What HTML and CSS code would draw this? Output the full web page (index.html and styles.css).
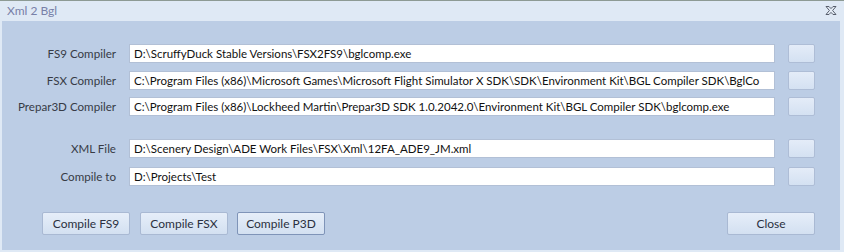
FILE: index.html
```html
<!DOCTYPE html>
<html>
<head>
<meta charset="utf-8">
<link rel="stylesheet" href="styles.css">
</head>
<body>
<div class="window">
  <div class="titlebar">
    <span class="title">Xml 2 Bgl</span>
    <svg class="close-x" width="12" height="9" viewBox="0 0 12 9">
      <path d="M1 0.5 H4 L6 2.6 L8 0.5 H11 L7.6 4.5 L11 8.5 H8 L6 6.4 L4 8.5 H1 L4.4 4.5 Z" fill="#e4ecf6" stroke="#575e6c" stroke-width="1"/>
    </svg>
  </div>
  <div class="panel">
    <div class="fields group1">
      <div class="row">
        <label class="lbl">FS9 Compiler</label>
        <div class="field">D:\ScruffyDuck Stable Versions\FSX2FS9\bglcomp.exe</div>
        <div class="browse"></div>
      </div>
      <div class="row r2">
        <label class="lbl">FSX Compiler</label>
        <div class="field">C:\Program Files (x86)\Microsoft Games\Microsoft Flight Simulator X SDK\SDK\Environment Kit\BGL Compiler SDK\BglCo</div>
        <div class="browse"></div>
      </div>
      <div class="row r3">
        <label class="lbl">Prepar3D Compiler</label>
        <div class="field">C:\Program Files (x86)\Lockheed Martin\Prepar3D SDK 1.0.2042.0\Environment Kit\BGL Compiler SDK\bglcomp.exe</div>
        <div class="browse"></div>
      </div>
    </div>
    <div class="fields group2">
      <div class="row">
        <label class="lbl">XML File</label>
        <div class="field">D:\Scenery Design\ADE Work Files\FSX\Xml\12FA_ADE9_JM.xml</div>
        <div class="browse"></div>
      </div>
      <div class="row r5">
        <label class="lbl">Compile to</label>
        <div class="field">D:\Projects\Test</div>
        <div class="browse"></div>
      </div>
    </div>
    <div class="actions">
      <button class="btn">Compile FS9</button>
      <button class="btn b2">Compile FSX</button>
      <button class="btn b3 focused">Compile P3D</button>
      <button class="btn close">Close</button>
    </div>
  </div>
</div>
</body>
</html>
```
FILE: styles.css
```css
* { box-sizing: border-box; }
html, body {
  margin: 0;
  padding: 0;
  width: 844px;
  height: 252px;
  overflow: hidden;
  background: #dfe9f5;
  font-family: "Lato", "Noto Sans", sans-serif;
  font-size: 12px;
}
.window {
  width: 844px;
  height: 252px;
  border-top: 1px solid #8d9a94;
  background: #dfe9f5;
  display: flex;
  flex-direction: column;
}
.titlebar {
  height: 20px;
  display: flex;
  align-items: center;
  justify-content: space-between;
  padding: 0 7px 0 7px;
}
.title {
  color: #7880a8;
  line-height: 20px;
}
.close-x { margin-top: -1px; }
.panel {
  margin: 0 4px 2px 2px;
  flex: 1;
  background: #bccde5;
  padding-top: 23px;
}
.row {
  display: flex;
  align-items: center;
  height: 19px;
}
.r2 { margin-top: 8px; }
.r3 { margin-top: 7px; }
.group2 { margin-top: 23px; }
.r5 { margin-top: 9px; }
.lbl {
  width: 114px;
  text-align: right;
  color: #373b45;
  white-space: nowrap;
  line-height: 19px;
  font-size: 11.6px;
}
.field {
  margin-left: 13px;
  width: 646px;
  height: 19px;
  background: #ffffff;
  border: 1px solid #b2c0d6;
  color: #111;
  padding: 0 0 0 4px;
  line-height: 17px;
  white-space: nowrap;
  overflow: hidden;
  font-size: 11.5px;
  letter-spacing: 0;
}
.browse {
  margin-left: 13px;
  width: 27px;
  height: 19px;
  border: 1px solid #aebdd6;
  border-radius: 2px;
  background: linear-gradient(#e4ecf8, #d4e1f2);
}
.actions {
  display: flex;
  margin-top: 26px;
  padding-left: 40px;
}
.btn {
  width: 88px;
  height: 23px;
  font-family: inherit;
  font-size: 12px;
  color: #2b3040;
  border: 1px solid #a9b9d3;
  border-radius: 2px;
  background: linear-gradient(#e6eef9, #d3e0f1);
  padding: 0;
}
.b2 { margin-left: 10px; }
.b3 { margin-left: 9px; }
.focused { border-color: #7f94b8; }
.close { margin-left: auto; margin-right: 25px; }
```
